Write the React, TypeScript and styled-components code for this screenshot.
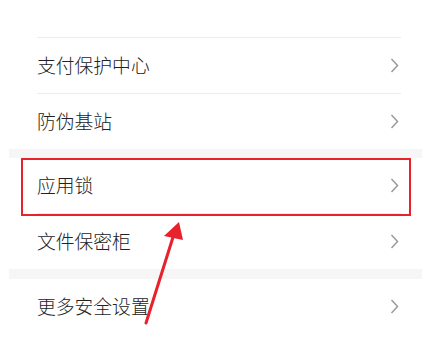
import React from "react";
import styled, { createGlobalStyle } from "styled-components";

const Global = createGlobalStyle`
  html, body { margin: 0; padding: 0; background: #ffffff; }
  body { font-family: "Noto Sans CJK SC", "Noto Sans", sans-serif; }
`;

const Page = styled.div`
  position: relative;
  width: 422px;
  height: 345px;
  background: #ffffff;
  overflow: hidden;
`;

const TopSpacer = styled.div`
  height: 37px;
  margin: 0 21px 0 37px;
  border-bottom: 1px solid #ececec;
`;

const Group = styled.div`
  display: flex;
  flex-direction: column;
`;

const Band = styled.div<{ $h: number }>`
  height: ${(p) => p.$h}px;
  margin-left: 9px;
  background: #f6f6f6;
`;

const Row = styled.div<{ $last?: boolean }>`
  height: 55px;
  margin: 0 21px 0 37px;
  display: flex;
  align-items: center;
  justify-content: space-between;
  border-bottom: ${(p) => (p.$last ? "none" : "1px solid #ececec")};
`;

const Label = styled.span`
  font-size: 18.8px;
  font-weight: 300;
  color: #222222;
  line-height: 1;
`;

const Chevron = styled.svg`
  width: 9px;
  height: 15px;
  margin-right: 2px;
  display: block;
`;

const Highlight = styled.div`
  position: absolute;
  left: 21px;
  top: 158px;
  width: 386px;
  height: 54px;
  border: 2px solid #e8212b;
`;

const ArrowSvg = styled.svg`
  position: absolute;
  left: 0;
  top: 0;
  width: 422px;
  height: 345px;
  pointer-events: none;
`;

const Arrow = () => (
  <Chevron viewBox="0 0 9 15">
    <polyline points="1.5,1 7.5,7.5 1.5,14" fill="none" stroke="#9a9a9a" strokeWidth="1.5" />
  </Chevron>
);

const groups: { items: string[]; band: number }[] = [
  { items: ["支付保护中心", "防伪基站"], band: 9 },
  { items: ["应用锁", "文件保密柜"], band: 10 },
  { items: ["更多安全设置"], band: 0 },
];

export default function App() {
  return (
    <Page>
      <Global />
      <TopSpacer />
      {groups.map((g, gi) => (
        <React.Fragment key={gi}>
          <Group>
            {g.items.map((t, i) => (
              <Row key={t} $last={i === g.items.length - 1}>
                <Label>{t}</Label>
                <Arrow />
              </Row>
            ))}
          </Group>
          {g.band > 0 && <Band $h={g.band} />}
        </React.Fragment>
      ))}
      <Highlight />
      <ArrowSvg viewBox="0 0 422 345">
        <line x1="146" y1="323" x2="174" y2="234" stroke="#e8212b" strokeWidth="3" strokeLinecap="round" />
        <polygon points="179,222 164,236 183,240" fill="#e8212b" />
      </ArrowSvg>
    </Page>
  );
}
